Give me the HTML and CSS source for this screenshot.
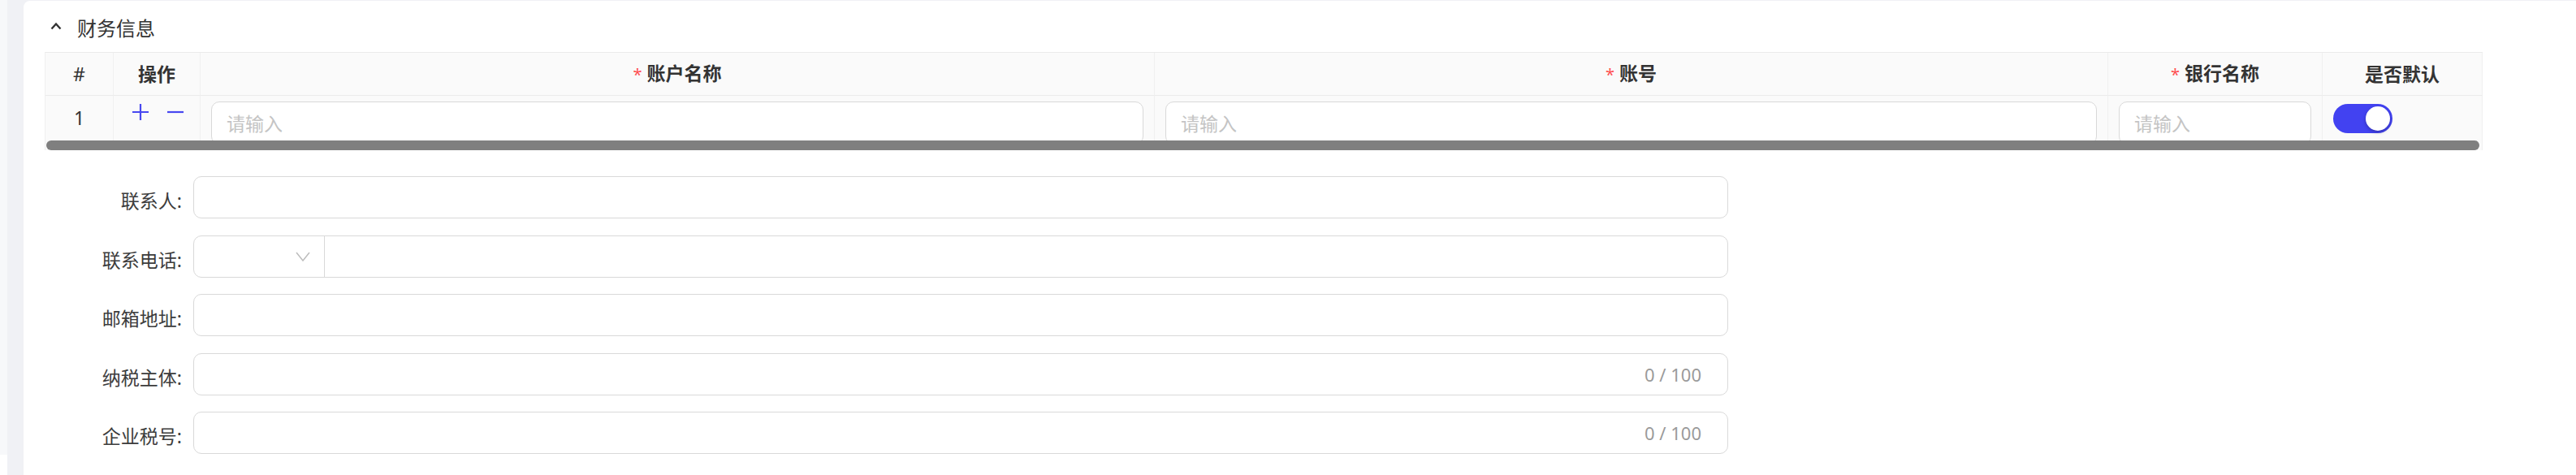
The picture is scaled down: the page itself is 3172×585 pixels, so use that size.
FILE: index.html
```html
<!DOCTYPE html>
<html lang="zh-CN">
<head>
  <meta charset="UTF-8" />
  <meta name="viewport" content="width=device-width, initial-scale=1.0" />
  <title>财务信息</title>
  <link rel="stylesheet" href="styles.css">
</head>
<body>
  <div class="page">
    <div class="side"></div>
    <div class="main">
      <div class="card">
        <!-- 标题 -->
        <div class="section-title">
          <svg class="caret" width="14" height="10" viewBox="0 0 14 10"><polyline points="1.5,8.5 7,2.5 12.5,8.5" fill="none" stroke="#333" stroke-width="2.4"/></svg>
          <span>财务信息</span>
        </div>

        <!-- 银行账户表格 -->
        <div class="table-wrap">
          <table class="bank-table">
            <colgroup>
              <col style="width:84px">
              <col style="width:107px">
              <col style="width:1175px">
              <col style="width:1174px">
              <col style="width:264px">
              <col style="width:197px">
            </colgroup>
            <thead>
              <tr>
                <th class="plain">#</th>
                <th>操作</th>
                <th><span class="req">*</span>账户名称</th>
                <th><span class="req">*</span>账号</th>
                <th><span class="req">*</span>银行名称</th>
                <th>是否默认</th>
              </tr>
            </thead>
            <tbody>
              <tr>
                <td class="idx">1</td>
                <td class="ops">
                  <svg width="22" height="22" viewBox="0 0 22 22"><path d="M11 1v20M1 11h20" stroke="#4848f0" stroke-width="2.2"/></svg>
                  <svg width="20" height="22" viewBox="0 0 20 22"><path d="M0 11h20" stroke="#4848f0" stroke-width="2.2"/></svg>
                </td>
                <td><input class="input" placeholder="请输入"></td>
                <td><input class="input" placeholder="请输入"></td>
                <td><input class="input" placeholder="请输入"></td>
                <td class="sw-cell"><span class="switch"><span class="knob"></span></span></td>
              </tr>
            </tbody>
          </table>
          <div class="scrollbar"></div>
        </div>

        <!-- 联系信息 -->
        <div class="form">
          <div class="form-row">
            <label>联系人:</label>
            <input class="input wide">
          </div>
          <div class="form-row">
            <label>联系电话:</label>
            <div class="phone">
              <div class="prefix">
                <svg width="18" height="12" viewBox="0 0 18 12"><polyline points="1,1 9,11 17,1" fill="none" stroke="#bdbdbd" stroke-width="1.5"/></svg>
              </div>
              <input class="phone-input">
            </div>
          </div>
          <div class="form-row">
            <label>邮箱地址:</label>
            <input class="input wide">
          </div>
          <div class="form-row">
            <label>纳税主体:</label>
            <div class="counted">
              <input class="counted-input">
              <span class="count">0 / 100</span>
            </div>
          </div>
          <div class="form-row">
            <label>企业税号:</label>
            <div class="counted">
              <input class="counted-input">
              <span class="count">0 / 100</span>
            </div>
          </div>
        </div>
      </div>
    </div>
  </div>
</body>
</html>
```

FILE: styles.css
```css
body {
  margin: 0;
  padding: 0;
  background: #fff;
  font-family: "Noto Sans", "Noto Sans CJK SC", sans-serif;
  color: #333;
  overflow: hidden;
}
.page {
  display: flex;
  width: 3172px;
  height: 585px;
}
.side {
  width: 9px;
  height: 560px;
  background: #f7f8fa;
}
.main {
  flex: 1;
  background: #f0f1f5;
  padding: 1px 0 0 20px;
}
.card {
  background: #fff;
  border-top-left-radius: 8px;
  height: 584px;
  box-sizing: border-box;
  padding: 16px 0 0 26px;
}
.section-title {
  display: flex;
  align-items: center;
  gap: 19px;
  height: 32px;
  padding-left: 7px;
  margin-bottom: 15px;
  font-size: 24px;
  color: #333;
}
.caret {
  margin-top: -2px;
}
.table-wrap {
  position: relative;
  width: 3001px;
}
.bank-table {
  width: 3001px;
  table-layout: fixed;
  border-collapse: separate;
  border-spacing: 0;
  background: #fafafa;
  border-top: 1px solid #ebebeb;
  border-left: 1px solid #f0f0f0;
  font-size: 23px;
}
.bank-table th {
  line-height: 50px;
  padding: 0;
  font-weight: 700;
  color: #333;
  text-align: center;
  border-bottom: 1px solid #ebebeb;
  border-right: 1px solid #f0f0f0;
}
.bank-table th.plain {
  font-weight: 400;
}
.req {
  color: #ff4d4f;
  font-weight: 400;
  font-size: 20px;
  margin-right: 6px;
}
.bank-table td {
  padding: 7px 13px;
  vertical-align: top;
  border-right: 1px solid #f0f0f0;
}
.bank-table td.idx {
  padding-top: 11px;
  line-height: 32px;
  text-align: center;
  color: #333;
}
.bank-table td.ops {
  padding: 9px 0 0 22px;
}
.ops svg {
  display: inline-block;
  vertical-align: top;
  margin-right: 16px;
}
.bank-table td.sw-cell {
  padding-top: 10px;
}
.input {
  display: block;
  box-sizing: border-box;
  width: 100%;
  height: 53px;
  border: 1px solid #d9d9d9;
  border-radius: 10px;
  background: #fff;
  padding: 0 18px;
  font-family: inherit;
  font-size: 23px;
  color: #333;
  outline: none;
}
.input::placeholder {
  color: #c4c4c4;
}
.switch {
  display: block;
  position: relative;
  width: 73px;
  height: 36px;
  border-radius: 18px;
  background: #4242f1;
}
.knob {
  position: absolute;
  top: 3px;
  right: 3px;
  width: 30px;
  height: 30px;
  border-radius: 50%;
  background: #fff;
  box-shadow: 0 2px 4px rgba(0, 0, 0, 0.25);
}
.scrollbar {
  position: absolute;
  left: 2px;
  right: 3px;
  bottom: 0;
  height: 12px;
  border-radius: 6px;
  background: #7f7f7f;
}
.form {
  display: flex;
  flex-direction: column;
  gap: 20.5px;
  margin-top: 32px;
}
.form-row {
  display: flex;
  align-items: center;
}
.form-row label {
  width: 169px;
  text-align: right;
  font-size: 23px;
  color: #3c3c3c;
  margin-right: 14px;
  padding-top: 6px;
}
.input.wide {
  width: 1890px;
  height: 52px;
}
.phone,
.counted {
  display: flex;
  box-sizing: border-box;
  width: 1890px;
  height: 52px;
  border: 1px solid #d9d9d9;
  border-radius: 10px;
  background: #fff;
  overflow: hidden;
}
.prefix {
  display: flex;
  align-items: center;
  justify-content: flex-end;
  width: 161px;
  padding-right: 17px;
  box-sizing: border-box;
  border-right: 1px solid #d9d9d9;
}
.phone-input,
.counted-input {
  flex: 1;
  border: none;
  outline: none;
  font-family: inherit;
  font-size: 23px;
  padding: 0 18px;
  background: transparent;
}
.count {
  align-self: center;
  padding-right: 32px;
  font-size: 22px;
  color: #9a9a9a;
}
```
